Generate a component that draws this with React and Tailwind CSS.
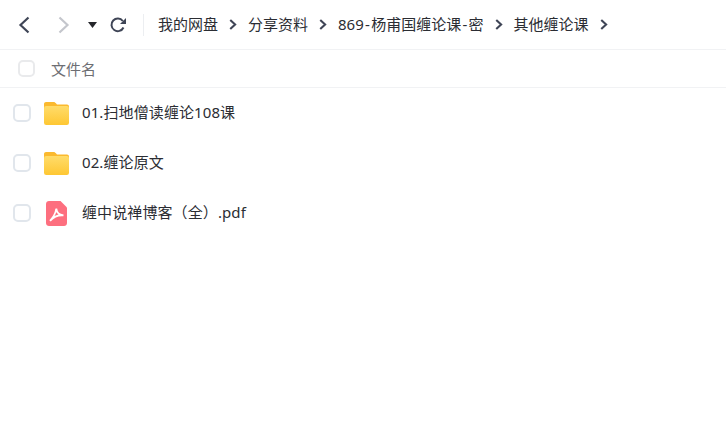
const font = '"Noto Sans", "Noto Sans CJK SC", sans-serif';

const Dash = () => <span className="px-[1.250px]">-</span>;

const crumbs = [
  "我的网盘",
  "分享资料",
  <>869<Dash />杨甫国缠论课<Dash />密</>,
  "其他缠论课",
];

const files = [
  { id: 1, name: "01.扫地僧读缠论108课", type: "folder" },
  { id: 2, name: "02.缠论原文", type: "folder" },
  { id: 3, name: "缠中说禅博客（全）.pdf", type: "pdf" },
];

function Chevron({ dir = "right", color = "#3f4556", width = 2.2, className = "" }) {
  return (
    <svg viewBox="0 0 12 18" className={className} fill="none">
      <path
        d={dir === "left" ? "M10.5 1.5 2.5 9l8 7.5" : "M1.5 1.5 9.5 9l-8 7.5"}
        stroke={color}
        strokeWidth={width}
      />
    </svg>
  );
}

function FolderIcon({ id }) {
  return (
    <svg viewBox="0 0 25 23" className="w-[25px] h-[23px]">
      <defs>
        <linearGradient id={id} x1="0" y1="0" x2="0" y2="1">
          <stop offset="0" stopColor="#ffdc6a" />
          <stop offset="1" stopColor="#fec733" />
        </linearGradient>
      </defs>
      <path d="M2 0h7.500c1 0 1.600.4 2.200 1.100L13 2.600h10c1.100 0 2 .9 2 2V8H0V2C0 .9.9 0 2 0z" fill="#fbb92e" />
      <rect x="0" y="4" width="25" height="19" rx="2.200" fill={`url(#${id})`} />
    </svg>
  );
}

function PdfIcon() {
  return (
    <svg viewBox="0 0 21 25" className="w-[21px] h-[25px]">
      <path d="M3 0h11.500L21 6.500V22c0 1.700-1.300 3-3 3H3c-1.700 0-3-1.300-3-3V3c0-1.700 1.300-3 3-3z" fill="#fd6f7f" />
      <path
        d="M10.300 7.500c-.5 3.800-2.500 8.200-6.300 12.300M10.300 7.500c.3 3.300 2.700 6.300 7.200 6.800M17.500 14.300c-4.800-.4-9.500 1-13.500 5.500"
        stroke="#ffffff"
        strokeWidth="1.800"
        fill="none"
      />
    </svg>
  );
}

export default function App() {
  return (
    <div className="w-[726px] h-[430px] bg-white overflow-hidden text-[15px] text-[#2b2d33]" style={{ fontFamily: font }}>
      <div className="h-[50px] flex items-center border-b border-[#f1f2f4] pl-[18px]">
        <Chevron dir="left" color="#3f4556" className="w-[12px] h-[18px]" />
        <Chevron color="#c4c6cc" className="w-[12px] h-[18px] ml-[28px]" />
        <svg viewBox="0 0 9 6" className="w-[9px] h-[6px] ml-[18px]">
          <path d="M0 0h9L4.500 6z" fill="#25262b" />
        </svg>
        <svg viewBox="0 0 16 16" className="w-[16px] h-[16px] ml-[13px]" fill="none">
          <path d="M13.500 10.500A6.300 6.300 0 1 1 12.800 4" stroke="#3f4556" strokeWidth="2" />
          <path d="M16 1v6h-6z" fill="#3f4556" />
        </svg>
        <div className="w-px h-[22px] bg-[#eceef1] ml-[17px] mr-[14px]" />
        {crumbs.map((c, i) => (
          <div key={i} className="flex items-center">
            <span className="-mt-px">{c}</span>
            <Chevron width={3.4} className="w-[8px] h-[11px] mx-[11px]" />
          </div>
        ))}
      </div>

      <div className="h-[38px] flex items-center border-b border-[#f1f2f4] pl-[18px] text-[#6d6e73]">
        <span className="w-[17px] h-[17px] rounded-[5px] border-2 border-[#e9eaec]" />
        <span className="ml-[16px] mt-px">文件名</span>
      </div>

      <div>
        {files.map((f) => (
          <div key={f.id} className="h-[50px] flex items-center pl-[13px]">
            <span className="w-[18px] h-[18px] rounded-[5px] border-2 border-[#e1e6ec]" />
            <span className="w-[25px] ml-[13px] flex justify-center">
              {f.type === "folder" ? <FolderIcon id={`folder-${f.id}`} /> : <PdfIcon />}
            </span>
            <span className="ml-[13px] -mt-px tracking-[0.1px]">{f.name}</span>
          </div>
        ))}
      </div>
    </div>
  );
}
